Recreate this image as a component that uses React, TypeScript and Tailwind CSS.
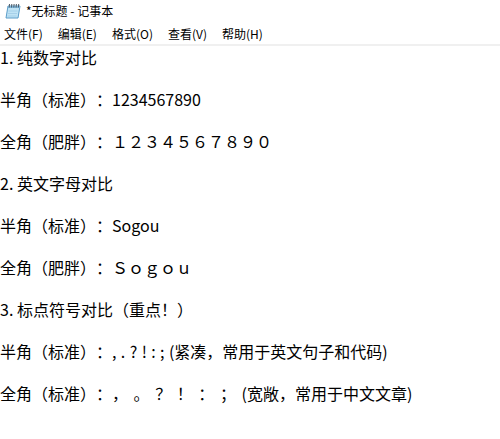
import React from 'react';

type Line = string | React.ReactNode;

const lines: Line[] = [
  '1. 纯数字对比',
  '',
  '半角（标准）：1234567890',
  '',
  '全角（肥胖）：１２３４５６７８９０',
  '',
  '2. 英文字母对比',
  '',
  '半角（标准）：Sogou',
  '',
  '全角（肥胖）：Ｓｏｇｏｕ',
  '',
  '3. 标点符号对比（重点！）',
  '',
  <>
    半角（标准）：<span className="tracking-[0.4px]">, . ? ! : ; </span>(紧凑，常用于英文句子和代码)
  </>,
  '',
  <>
    全角（标准）：<span className="tracking-[1px]">， 。 ？ ！ ： ； </span>(宽敞，常用于中文文章)
  </>,
];

const menus = ['文件(F)', '编辑(E)', '格式(O)', '查看(V)', '帮助(H)'];

const NotepadIcon = () => (
  <svg width="16" height="16" viewBox="0 0 16 16">
    <polygon points="3,3 15,3 13,15 1,15" fill="#bfe3f5" stroke="#5a9cc8" strokeWidth="1" />
    <polygon points="3,3 15,3 14.6,5 2.6,5" fill="#7fb8dc" />
    {[4.5, 6.8, 9.1, 11.4, 13.7].map(x => (
      <line key={x} x1={x} y1="1" x2={x - 0.3} y2="4.5" stroke="#4d5a66" strokeWidth="1" />
    ))}
    <line x1="3.5" y1="8" x2="12.5" y2="8" stroke="#9fcbe6" strokeWidth="0.8" />
    <line x1="3" y1="10.5" x2="12" y2="10.5" stroke="#9fcbe6" strokeWidth="0.8" />
    <line x1="2.6" y1="13" x2="11.6" y2="13" stroke="#9fcbe6" strokeWidth="0.8" />
  </svg>
);

export default function App() {
  return (
    <div
      className="w-[500px] h-[439px] bg-white text-black overflow-hidden [text-spacing-trim:space-all]"
      style={{ fontFamily: '"Noto Sans CJK SC", "Noto Sans", sans-serif' }}
    >
      {/* 标题栏 */}
      <div className="h-[21px] flex items-center pl-[5px] gap-[5px] text-[12px]">
        <NotepadIcon />
        <span>*无标题 - 记事本</span>
      </div>

      {/* 菜单栏 */}
      <div className="h-[23px] pt-[3px] pl-[4px] flex items-center gap-[15px] text-[12px]">
        {menus.map(m => (
          <span key={m}>{m}</span>
        ))}
      </div>
      <div className="h-[2px] bg-[#f0f0f0]" />

      {/* 编辑区 */}
      <div className="pt-[1px] text-[16px] leading-[21px] whitespace-pre">
        {lines.map((line, i) => (
          <div key={i} className="h-[21px]">
            {line || '\u00a0'}
          </div>
        ))}
      </div>
    </div>
  );
}
